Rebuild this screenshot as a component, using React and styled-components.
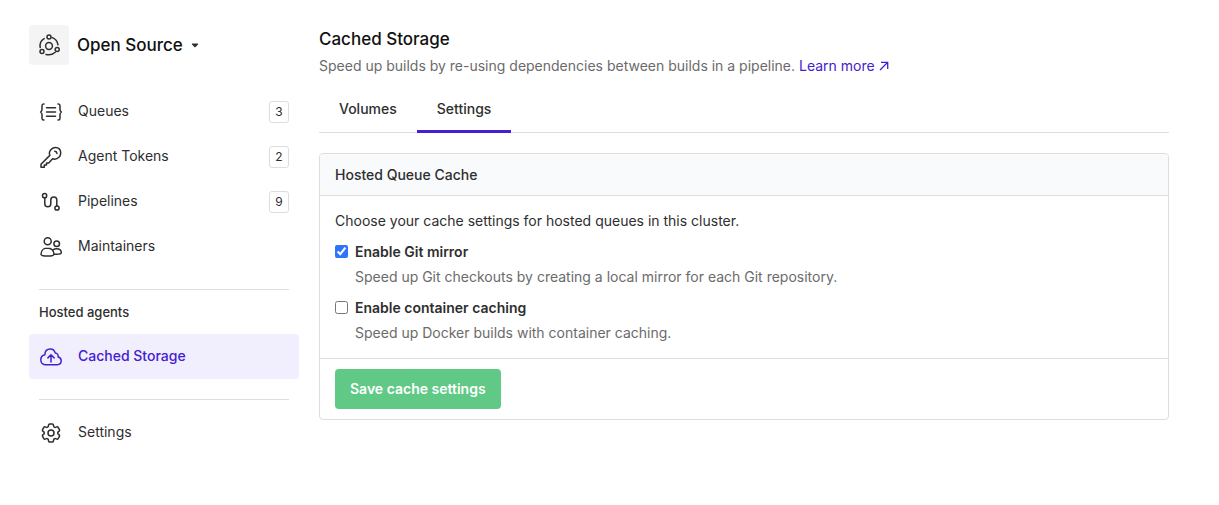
import React, { useState } from "react";
import styled, { createGlobalStyle } from "styled-components";
import { HiOutlineCog6Tooth } from "react-icons/hi2";

const clusterLinks = [
  { name: "Queues", icon: "queues", count: 3 },
  { name: "Agent Tokens", icon: "key", count: 2 },
  { name: "Pipelines", icon: "pipelines", count: 9 },
  { name: "Maintainers", icon: "people" },
];

const tabs = ["Volumes", "Settings"];

const options = [
  {
    id: "git-mirror",
    title: "Enable Git mirror",
    text: "Speed up Git checkouts by creating a local mirror for each Git repository.",
  },
  {
    id: "container-caching",
    title: "Enable container caching",
    text: "Speed up Docker builds with container caching.",
  },
];

const icons = {
  cluster: (
    <>
      <circle cx="12" cy="13" r="3.4" />
      <circle cx="12" cy="4" r="2" />
      <circle cx="5" cy="18.4" r="2" />
      <circle cx="20.2" cy="16.6" r="2" />
      <path d="M3.2 14.6C2.6 11 4 7.4 7.2 5.6M15.2 4.6c3 1.2 5.3 3.6 5.8 7.2M9 21.4c3.4.9 6.8.1 9.2-2.2" />
    </>
  ),
  queues: (
    <>
      <path d="M5 4H4.6C3.4 4 3 4.8 3 5.8v3.4c0 1.2-.5 2.2-1.4 2.8.9.6 1.4 1.6 1.4 2.8v3.4c0 1 .4 1.8 1.6 1.8H5" />
      <path d="M19 4h.4c1.2 0 1.6.8 1.6 1.8v3.4c0 1.2.5 2.2 1.4 2.8-.9.6-1.4 1.6-1.4 2.8v3.4c0 1-.4 1.8-1.6 1.8H19" />
      <path d="M7.5 7.8h9M7.5 12h9M7.5 16.2h9" />
    </>
  ),
  key: (
    <>
      <path d="M20.3 3.9c-2.1-2.1-5.7-1.9-8 .4-1.8 1.8-2.3 4.1-1.5 6.1L2 19.3v3h3.3v-2.2h2.2v-2.2h2.2l3.9-4.1c2.1.8 4.5.2 6.3-1.5 2.3-2.3 2.5-6.3.4-8.4z" />
      <path d="M15.8 6.3c1.2.1 2 .9 2.2 2.2" />
    </>
  ),
  pipelines: (
    <>
      <circle cx="5.6" cy="5.7" r="2.1" />
      <circle cx="18" cy="18" r="2.1" />
      <path d="M5.8 8v5.8a3 3 0 0 0 6 0V10a3 3 0 0 1 6 0v5.8" />
    </>
  ),
  people: (
    <>
      <circle cx="8.7" cy="6.2" r="3.5" />
      <circle cx="17.7" cy="8.7" r="2.8" />
      <path d="M8.5 13c-3.8 0-6.5 2.5-6.5 6.2 0 1 1.7 1.8 6.5 1.8s6.5-.8 6.5-1.8c0-3.7-2.7-6.2-6.5-6.2z" />
      <path d="M14 14.8c1-.7 2.2-1 3.5-1 2.8 0 4.8 1.6 4.8 4 0 .9-1.8 1.5-4.8 1.5-.9 0-1.7 0-2.3-.1" />
    </>
  ),
  cloud: (
    <>
      <path d="M6 19.7h12.2c2.3 0 4-1.7 4-3.9 0-2-1.3-3.5-3.1-3.9.3-2.3-.9-3.8-2.9-4-.7-2.4-2.5-3.9-5-3.9-3.1 0-5.2 2.3-5.3 5.7-2.5.5-4.1 2.4-4.1 4.9 0 2.9 1.8 5.1 4.2 5.1z" />
      <path d="M12 17V9.8M8.9 12.9L12 9.8l3.1 3.1" />
    </>
  ),
};

const Icon = ({ name }) => (
  <Glyph viewBox="0 0 24 24" aria-hidden="true">
    {icons[name]}
  </Glyph>
);

const Sidebar = () => (
  <Side>
    <ClusterButton type="button">
      <Avatar>
        <Icon name="cluster" />
      </Avatar>
      Open Source
      <Caret viewBox="0 0 8 5" aria-hidden="true">
        <path d="M1.4.5h5.2c.6 0 .8.6.4 1L4.6 4a.8.8 0 0 1-1.2 0L1 1.5C.6 1.1.8.5 1.4.5z" />
      </Caret>
    </ClusterButton>
    <nav>
      {clusterLinks.map((link) => (
        <NavLink href="#" key={link.name}>
          <Icon name={link.icon} />
          <span>{link.name}</span>
          {link.count && <Count>{link.count}</Count>}
        </NavLink>
      ))}
      <Divider />
      <SectionTitle>Hosted agents</SectionTitle>
      <NavLink href="#" $active>
        <Icon name="cloud" />
        <span>Cached Storage</span>
      </NavLink>
      <Divider />
      <LastLink href="#">
        <HiOutlineCog6Tooth size={24} />
        <span>Settings</span>
      </LastLink>
    </nav>
  </Side>
);

const CacheForm = () => {
  const [checked, setChecked] = useState({ "git-mirror": true });

  const toggle = (id) => {
    setChecked({ ...checked, [id]: !checked[id] });
  };

  return (
    <Panel onSubmit={(e) => e.preventDefault()}>
      <PanelHeader>Hosted Queue Cache</PanelHeader>
      <PanelBody>
        <p>Choose your cache settings for hosted queues in this cluster.</p>
        {options.map((option) => (
          <Option key={option.id}>
            <input
              type="checkbox"
              id={option.id}
              checked={!!checked[option.id]}
              onChange={() => toggle(option.id)}
            />
            <label htmlFor={option.id}>{option.title}</label>
            <p>{option.text}</p>
          </Option>
        ))}
      </PanelBody>
      <PanelFooter>
        <SaveButton type="submit">Save cache settings</SaveButton>
      </PanelFooter>
    </Panel>
  );
};

const App = () => {
  return (
    <>
      <GlobalStyle />
      <Page>
        <Sidebar />
        <Main>
          <Title>Cached Storage</Title>
          <Subtitle>
            Speed up builds by re-using dependencies between builds in a pipeline.{" "}
            <a href="#">
              Learn more
              <svg viewBox="0 0 10 10" aria-hidden="true">
                <path d="M1 9l7.5-7.5M2 1.3h6.7V8" />
              </svg>
            </a>
          </Subtitle>
          <Tabs>
            {tabs.map((tab) => (
              <Tab href="#" key={tab} $active={tab === "Settings"}>
                {tab}
              </Tab>
            ))}
          </Tabs>
          <CacheForm />
        </Main>
      </Page>
    </>
  );
};

export default App;

const GlobalStyle = createGlobalStyle`
  * {
    box-sizing: border-box;
  }
  body {
    margin: 0;
    background: #fff;
    color: #2e2e2e;
    font-family: Inter, "Liberation Sans", sans-serif;
    font-size: 14px;
    line-height: 20px;
  }
  h1, h2, p {
    margin: 0;
  }
  a {
    color: inherit;
    text-decoration: none;
  }
  button {
    font-family: inherit;
    cursor: pointer;
  }
`;

const Page = styled.div`
  display: flex;
  gap: 20px;
  padding: 25px 50px 25px 29px;
`;

const Side = styled.aside`
  flex: 0 0 270px;
`;

const Glyph = styled.svg`
  flex: none;
  width: 24px;
  height: 24px;
  fill: none;
  stroke: currentColor;
  stroke-width: 1.5;
  stroke-linecap: round;
  stroke-linejoin: round;
`;

const ClusterButton = styled.button`
  display: flex;
  align-items: center;
  gap: 8px;
  margin-bottom: 24px;
  padding: 0;
  border: 0;
  background: none;
  color: #111;
  font-size: 17px;
  font-weight: 500;
  line-height: 27px;
`;

const Avatar = styled.span`
  display: flex;
  align-items: center;
  justify-content: center;
  width: 40px;
  height: 40px;
  border-radius: 4px;
  background: #f4f4f4;
  color: #2e2e2e;
`;

const Caret = styled.svg`
  width: 8px;
  height: 5px;
  fill: #2e2e2e;
`;

const NavLink = styled.a`
  display: flex;
  align-items: center;
  height: 45px;
  padding: 0 10px;
  border-radius: 4px;
  background: ${(props) => (props.$active ? "#f1eefd" : "none")};
  color: ${(props) => (props.$active ? "#4320d0" : "#2e2e2e")};
  font-weight: ${(props) => (props.$active ? 500 : 400)};

  span {
    margin-left: 15px;
    padding-bottom: 1px;
  }
`;

const LastLink = styled(NavLink)`
  margin-top: 10px;
`;

const Count = styled.strong`
  min-width: 20px;
  margin-left: auto;
  border: 1px solid #ddd;
  border-radius: 3px;
  font-size: 12px;
  font-weight: 400;
  line-height: 20px;
  text-align: center;
`;

const Divider = styled.hr`
  height: 1px;
  margin: 20px 10px 0;
  border: 0;
  background: #ddd;
`;

const SectionTitle = styled.h2`
  padding: 12px 10px 11px;
  font-size: 13px;
  font-weight: 500;
  line-height: 21px;
`;

const Main = styled.main`
  flex: 1;
  min-width: 0;
`;

const Title = styled.h1`
  color: #111;
  font-size: 17px;
  font-weight: 500;
  line-height: 28px;
`;

const Subtitle = styled.p`
  margin-top: 3px;
  color: #6b6b6b;

  a {
    color: #4320d0;
  }
  svg {
    width: 10px;
    height: 10px;
    margin-left: 4px;
    fill: none;
    stroke: currentColor;
    stroke-width: 1.3;
  }
`;

const Tabs = styled.nav`
  display: flex;
  margin: 12px 0 20px;
  box-shadow: inset 0 -1px #ddd;
`;

const Tab = styled.a`
  padding: 10px 20px 11px;
  border-bottom: 3px solid ${(props) => (props.$active ? "#4320d0" : "transparent")};
  font-weight: 500;
  line-height: 21px;
`;

const Panel = styled.form`
  border: 1px solid #ddd;
  border-radius: 4px;
`;

const PanelHeader = styled.h2`
  padding: 10px 15px;
  border-bottom: 1px solid #ddd;
  border-radius: 3px 3px 0 0;
  background: #f9fafb;
  font-size: 14px;
  font-weight: 500;
  line-height: 21px;
`;

const PanelBody = styled.div`
  display: flex;
  flex-direction: column;
  gap: 11px;
  padding: 15px;
`;

const Option = styled.div`
  display: grid;
  grid-template-columns: 13px 1fr;
  gap: 5px 7px;

  input {
    width: 13px;
    height: 13px;
    margin: 3px 0 0;
    accent-color: #2f74ff;
  }
  label {
    justify-self: start;
    font-weight: 600;
  }
  p {
    grid-column: 2;
    color: #6b6b6b;
  }
`;

const PanelFooter = styled.div`
  padding: 10px 15px;
  border-top: 1px solid #ddd;
`;

const SaveButton = styled.button`
  display: block;
  padding: 10px 15px;
  border: 0;
  border-radius: 4px;
  background: #5fc985;
  color: #fff;
  font-size: 14px;
  font-weight: 600;
  line-height: 20px;
`;
